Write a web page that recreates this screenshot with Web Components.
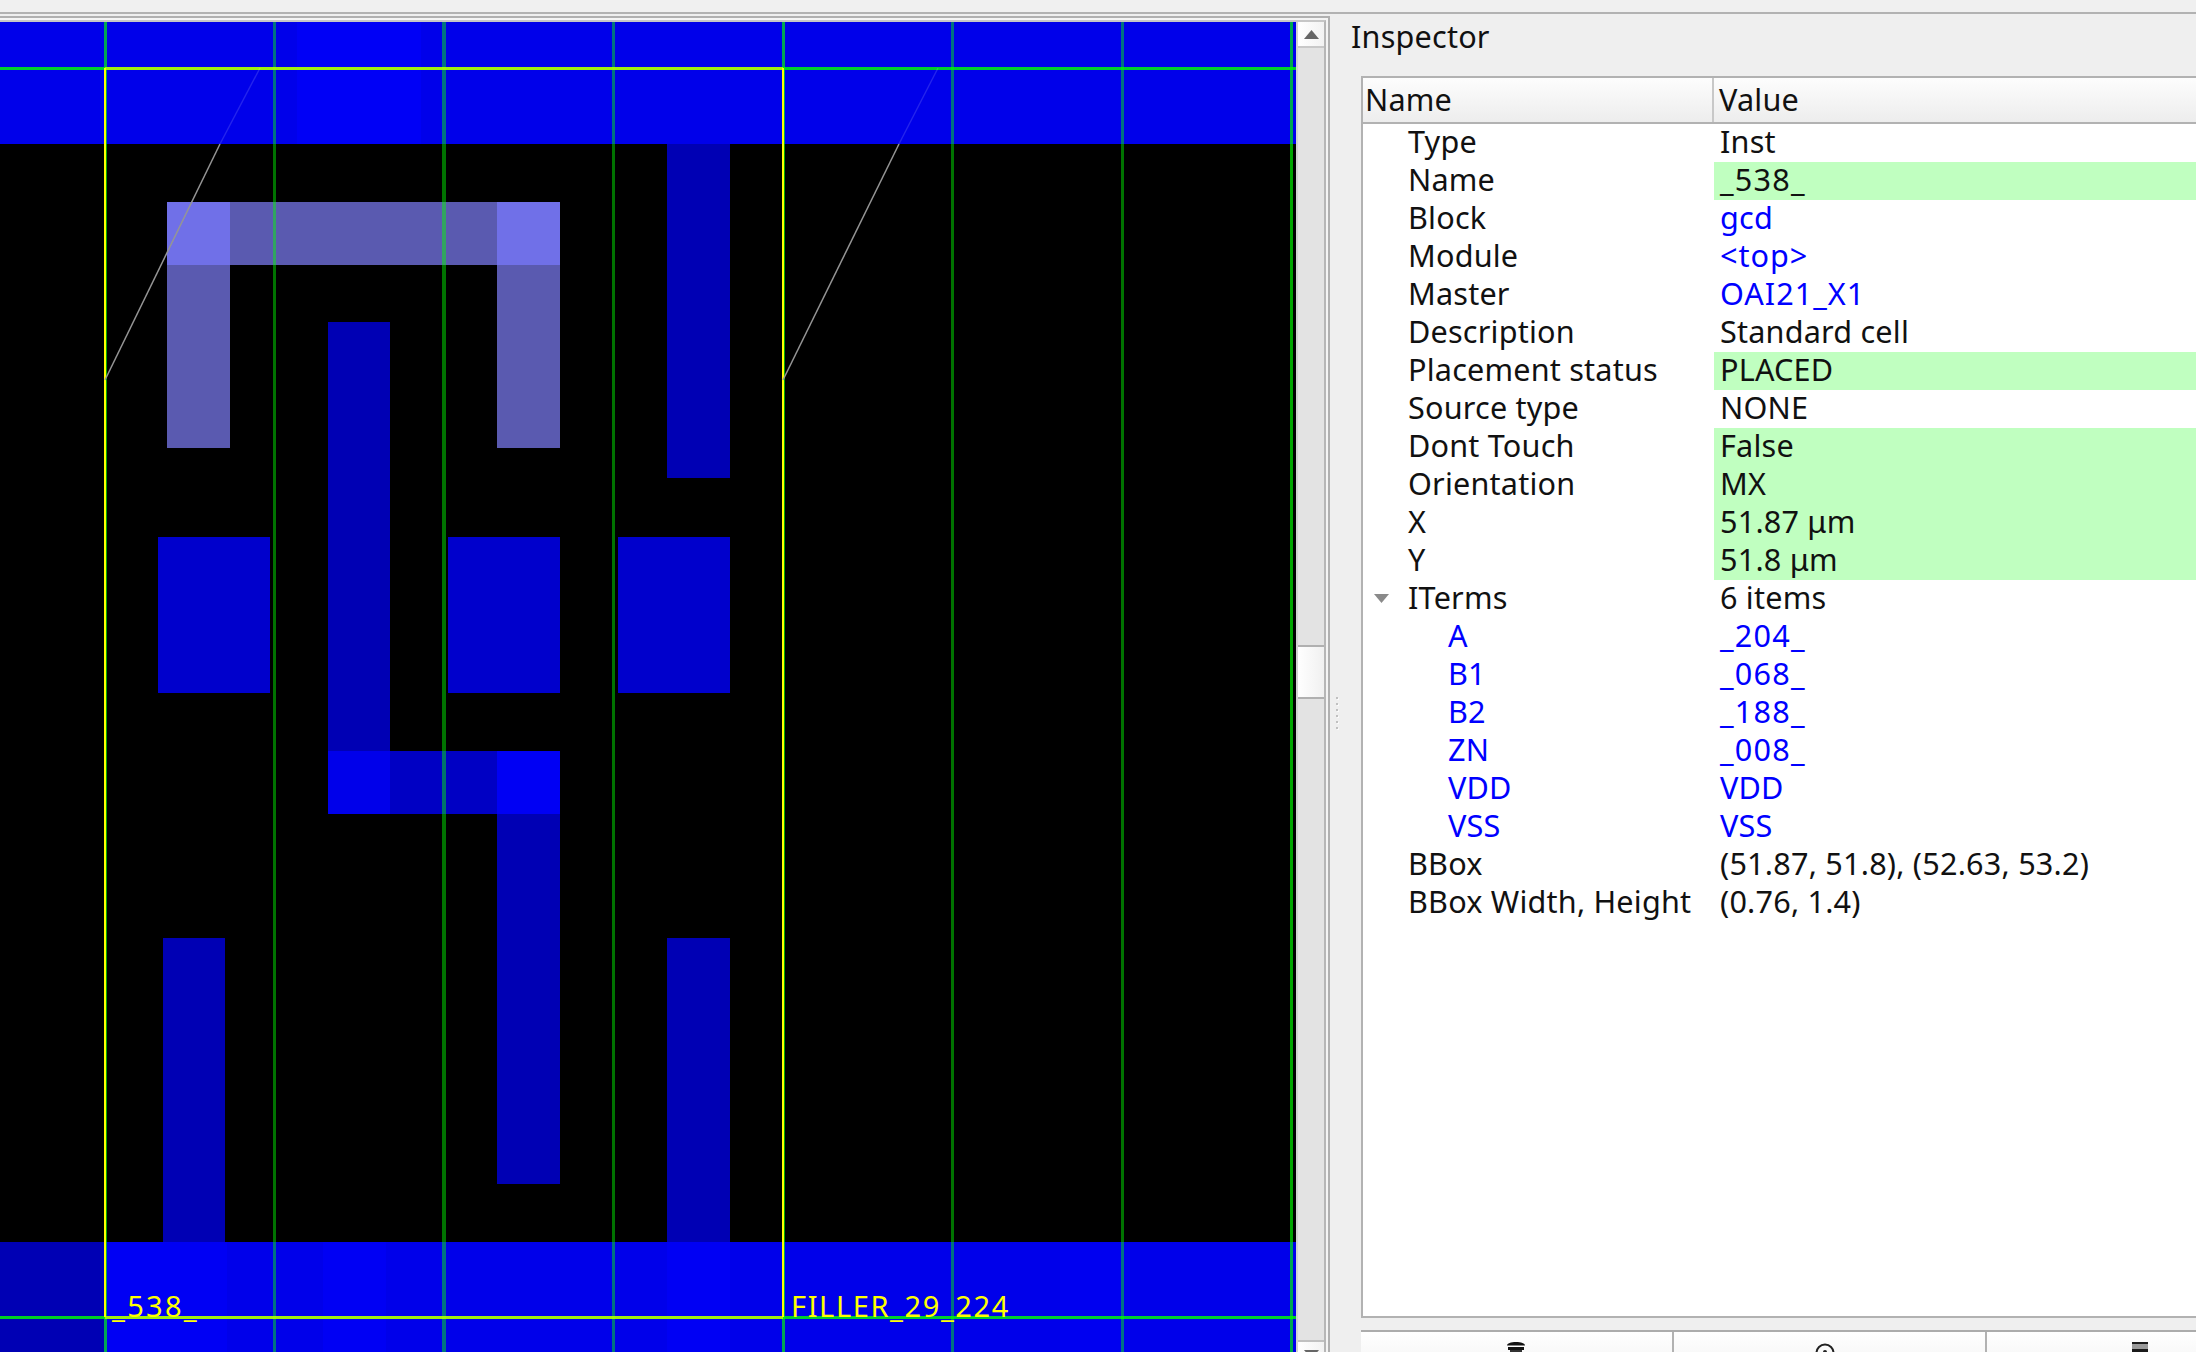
<!DOCTYPE html>
<html><head><meta charset="utf-8"><title>Inspector</title>
<style>
html,body{margin:0;padding:0;width:2196px;height:1352px;overflow:hidden;background:#efefef}
</style></head><body>
<app-shell>
  <layout-pane slot="left"></layout-pane>
  <inspector-dock slot="right">
    <prop-table>
      <prop-row name="Type" value="Inst"></prop-row>
      <prop-row name="Name" value="_538_" editable track="1.2"></prop-row>
      <prop-row name="Block" value="gcd" link></prop-row>
      <prop-row name="Module" value="&lt;top&gt;" link track="1"></prop-row>
      <prop-row name="Master" value="OAI21_X1" link track="1"></prop-row>
      <prop-row name="Description" value="Standard cell"></prop-row>
      <prop-row name="Placement status" value="PLACED" editable></prop-row>
      <prop-row name="Source type" value="NONE"></prop-row>
      <prop-row name="Dont Touch" value="False" editable></prop-row>
      <prop-row name="Orientation" value="MX" editable></prop-row>
      <prop-row name="X" value="51.87 μm" editable></prop-row>
      <prop-row name="Y" value="51.8 μm" editable></prop-row>
      <prop-row name="ITerms" value="6 items" open></prop-row>
      <prop-row name="A" value="_204_" link child track="1.2"></prop-row>
      <prop-row name="B1" value="_068_" link child track="1.2"></prop-row>
      <prop-row name="B2" value="_188_" link child track="1.2"></prop-row>
      <prop-row name="ZN" value="_008_" link child track="1.2"></prop-row>
      <prop-row name="VDD" value="VDD" link child></prop-row>
      <prop-row name="VSS" value="VSS" link child></prop-row>
      <prop-row name="BBox" value="(51.87, 51.8), (52.63, 53.2)" track=".22"></prop-row>
      <prop-row name="BBox Width, Height" value="(0.76, 1.4)"></prop-row>
    </prop-table>
    <action-bar></action-bar>
  </inspector-dock>
</app-shell>
<script>
function def(name, html, init){
  const t=document.createElement('template'); t.innerHTML=html;
  customElements.define(name, class extends HTMLElement{
    constructor(){super(); this.attachShadow({mode:'open'}).appendChild(t.content.cloneNode(true));}
    connectedCallback(){ if(init) init(this,this.shadowRoot); }
  });
}
def('app-shell',`<style>
:host{display:flex;flex-direction:column;width:2196px;height:1352px;overflow:hidden;background:#efefef;
font-family:"Noto Sans","Open Sans",sans-serif;font-size:30.6px;letter-spacing:.2px;color:#111}
.top{height:12px;background:#f0f0f0;border-bottom:2px solid #b2b2b2;flex:none}
.main{flex:1;display:flex;min-height:0}
</style><div class="top"></div><div class="main"><slot name="left"></slot><slot name="right"></slot></div>`);

def('layout-pane',`<style>
:host{display:flex;flex:none;box-sizing:border-box;width:1330px;margin-top:2px;border-top:2px solid #b0b0b0;border-right:2px solid #b0b0b0;padding:2px 2px 0 0;background:#f4f4f4}
.in{flex:1;display:flex;border-top:2px solid #c6c6c6;border-right:2px solid #b6b6b6;min-width:0}
</style><div class="in"><layout-canvas></layout-canvas><v-scroll></v-scroll></div>`);

def('layout-canvas',`<style>
:host{display:block;flex:none;width:1296px;height:1330px;background:#000;overflow:hidden}
svg{display:block}
text{font-family:"Noto Sans","Open Sans",sans-serif;font-size:29px;fill:#ffff00}
</style>
<svg width="1296" height="1330" viewBox="0 22 1296 1330" shape-rendering="crispEdges">
  <!-- top power rail -->
  <rect x="0" y="22" width="1296" height="122" fill="#0000ea"/>
  <rect x="297" y="22" width="124" height="122" fill="#0000f6"/>
  <!-- bottom power rail -->
  <rect x="0" y="1242" width="1296" height="110" fill="#0000ea"/>
  <rect x="0" y="1242" width="104" height="110" fill="#0000b4"/>
  <rect x="104" y="1242" width="123" height="110" fill="#0000f4"/>
  <rect x="323" y="1242" width="63" height="110" fill="#0000f4"/>
  <rect x="667" y="1242" width="63" height="110" fill="#0000f4"/>
  <rect x="1060" y="1242" width="70" height="110" fill="#0000f0"/>
  <!-- pillars -->
  <rect x="667" y="144" width="63" height="334" fill="#0000b4"/>
  <rect x="163" y="938" width="62" height="304" fill="#0000b4"/>
  <rect x="667" y="938" width="63" height="304" fill="#0000b4"/>
  <!-- contacts -->
  <rect x="158" y="537" width="112" height="156" fill="#0000cc"/>
  <rect x="448" y="537" width="112" height="156" fill="#0000cc"/>
  <rect x="618" y="537" width="112" height="156" fill="#0000cc"/>
  <!-- Z net -->
  <rect x="328" y="322" width="62" height="429" fill="#0000b4"/>
  <rect x="328" y="751" width="232" height="63" fill="#0000c4"/>
  <rect x="328" y="751" width="62" height="63" fill="#0000ea"/>
  <rect x="497" y="751" width="63" height="63" fill="#0000f4"/>
  <rect x="497" y="814" width="63" height="370" fill="#0000b4"/>
  <!-- highlighted pin shape -->
  <rect x="167" y="202" width="393" height="63" fill="#5a5ab0"/>
  <rect x="167" y="265" width="63" height="183" fill="#5a5ab0"/>
  <rect x="497" y="265" width="63" height="183" fill="#5a5ab0"/>
  <rect x="167" y="202" width="63" height="63" fill="#7070e8"/>
  <rect x="497" y="202" width="63" height="63" fill="#7070e8"/>
  <!-- grid -->
  <g fill="#00ff00" fill-opacity=".45">
    <rect x="273" y="22" width="3" height="1330"/>
    <rect x="442" y="22" width="4" height="1330"/>
    <rect x="612" y="22" width="3" height="1330"/>
    <rect x="951" y="22" width="3" height="1330"/>
    <rect x="1121" y="22" width="3" height="1330"/>
  </g>
  <g fill="#00ff00" fill-opacity=".65">
    <rect x="104" y="22" width="3" height="1330"/>
    <rect x="782" y="22" width="3" height="1330"/>
    <rect x="1290" y="22" width="3" height="1330"/>
  </g>
  <g fill="#00ff00" fill-opacity=".8">
    <rect x="0" y="67" width="1296" height="3"/>
    <rect x="0" y="1316" width="1296" height="3"/>
  </g>
  <!-- selected instance box -->
  <g fill="#ffff00" fill-opacity=".62">
    <rect x="105" y="67" width="678" height="3"/>
    <rect x="105" y="1316" width="678" height="3"/>
  </g>
  <rect x="104" y="68" width="2" height="1249" fill="#ffff00"/>
  <rect x="782" y="68" width="2" height="1249" fill="#ffff00"/>
  <!-- orientation ticks -->
  <g shape-rendering="geometricPrecision" fill="none">
    <path d="M105 380L220 144" stroke="#959595" stroke-width="1.5"/>
    <path d="M220 144L260 68" stroke="#fff" stroke-opacity=".14" stroke-width="1.4"/>
    <path d="M783 380L899 144" stroke="#959595" stroke-width="1.5"/>
    <path d="M899 144L938 68" stroke="#fff" stroke-opacity=".14" stroke-width="1.4"/>
  </g>
  <text x="112" y="1317" letter-spacing="2.3">_538_</text>
  <text x="791" y="1317" letter-spacing="1.6">FILLER_29_224</text>
</svg>`);

def('v-scroll',`<style>
:host{display:flex;flex-direction:column;flex:none;box-sizing:border-box;width:28px;height:1330px;border-left:2px solid #d2d2d2;background:#e3e3e3}
.btn{flex:none;height:24px;display:flex;align-items:center;justify-content:center;background:linear-gradient(90deg,#fff,#f2f2f2)}
.up{border-bottom:2px solid #c8c8c8}
.down{border-top:2px solid #c0c0c0;height:10px;align-items:flex-start;padding-top:0}
.groove{flex:1;padding-top:597px;box-sizing:border-box;min-height:0}
.thumb{box-sizing:border-box;height:54px;border-top:2px solid #b0b0b0;border-bottom:2px solid #b0b0b0;background:linear-gradient(90deg,#fff,#f0f0f0)}
svg{display:block}
</style>
<div class="btn up"><svg width="15" height="9" viewBox="0 0 15 9"><path d="M7.5 0L15 9H0z" fill="#666"/></svg></div>
<div class="groove"><div class="thumb"></div></div>
<div class="btn down"><svg style="margin-top:8px" width="15" height="9" viewBox="0 0 15 9"><path d="M0 0H15L7.5 9z" fill="#666"/></svg></div>`);

def('inspector-dock',`<style>
:host{display:grid;grid-template-columns:15px 1fr;flex:none;width:866px;height:1338px;overflow:hidden}
.grip{display:flex;flex-direction:column;align-items:center;gap:4px;padding-top:683px;padding-right:1px;box-sizing:border-box}
.grip i{display:block;width:2px;height:2px;background:#c0c0c0;box-shadow:1px 1px 0 #fafafa}
.dock{display:flex;flex-direction:column;min-width:0}
.title{flex:none;height:62px;box-sizing:border-box;padding:1px 0 0 6px;line-height:43px}
.body{flex:1;display:flex;flex-direction:column;padding-left:16px;width:954px;box-sizing:border-box;min-height:0}
</style>
<div class="grip"><i></i><i></i><i></i><i></i><i></i><i></i></div>
<div class="dock"><div class="title">Inspector</div><div class="body"><slot></slot></div></div>`);

def('prop-table',`<style>
:host{display:flex;flex-direction:column;flex:none;box-sizing:border-box;height:1242px;background:#fff;border:2px solid #b2b2b2;border-right:0}
.head{flex:none;display:grid;grid-template-columns:351px 1fr;height:44px;line-height:43px;border-bottom:2px solid #b2b2b2;background:linear-gradient(#fdfdfd,#ededed)}
.head div{padding-left:5px}
.head div:first-child{border-right:2px solid #c8c8c8;padding-left:2px;box-sizing:border-box}
</style>
<div class="head"><div>Name</div><div>Value</div></div><slot></slot>`);

def('prop-row',`<style>
:host{display:grid;grid-template-columns:351px 1fr;height:38px;line-height:35px;white-space:nowrap;flex:none}
.n{display:flex;padding-left:10px;box-sizing:border-box}
.tw{flex:none;width:35px;display:flex;align-items:center;height:38px}
.tw svg{display:none;margin:-2px 0 0 1px}
:host([open]) .tw svg{display:block}
:host([child]) .t{padding-left:40px;color:#0000ff}
.v{padding-left:6px}
:host([editable]) .v{background:#c0ffc0}
:host([link]) .v{color:#0000ff}
</style>
<div class="n"><span class="tw"><svg width="15" height="9" viewBox="0 0 15 9"><path d="M0 0H15L7.5 9z" fill="#8a8a8a"/></svg></span><span class="t"></span></div><div class="v"></div>`,
(el,r)=>{ const v=r.querySelector('.v'); r.querySelector('.t').textContent=el.getAttribute('name'); v.textContent=el.getAttribute('value'); if(el.hasAttribute('track')) v.style.letterSpacing=el.getAttribute('track')+'px'; });

def('action-button',`<style>
:host{display:flex;justify-content:center;flex:none;width:311px;box-sizing:content-box;background:linear-gradient(#ffffff,#f6f6f6);padding-top:10px;height:20px;overflow:hidden}
:host(:not(:last-child)){border-right:2px solid #b2b2b2}
:host(:first-child){border-top-left-radius:4px}
</style><slot></slot>`);

def('action-bar',`<style>
:host{display:flex;flex:none;margin-top:12px;height:22px;border-top:2px solid #acacac;overflow:hidden}
svg{display:block}
</style>
<action-button><svg width="20" height="12" viewBox="0 0 20 12" style="margin-left:-1px"><path d="M10 0C5 0 1 1.500 1 3.500H19C19 1.500 15 0 10 0Z" fill="#111"/><rect x="2" y="5" width="16" height="3" fill="#111"/><rect x="4" y="8" width="12" height="4" fill="#333"/></svg></action-button>
<action-button><svg width="20" height="12" viewBox="0 0 20 12" style="margin-left:-10px;margin-top:1px"><circle cx="10" cy="10" r="8.500" fill="none" stroke="#222" stroke-width="2"/><circle cx="10" cy="9" r="2" fill="#222"/></svg></action-button>
<action-button><svg width="16" height="10" viewBox="0 0 16 10" style="margin-left:-5px"><rect width="16" height="2" y="0" fill="#1a1a1a"/><rect width="16" height="5" y="2" fill="#999"/><rect width="16" height="3" y="7" fill="#1a1a1a"/></svg></action-button>`);
</script>
</body></html>
